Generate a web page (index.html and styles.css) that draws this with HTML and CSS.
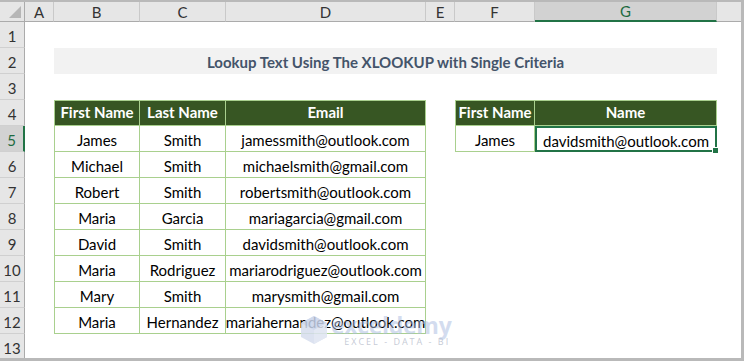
FILE: index.html
```html
<!DOCTYPE html>
<html lang="en">
<head>
    <meta charset="UTF-8">
    <title>Lookup Text Using XLOOKUP</title>
    <link rel="stylesheet" href="styles.css">
</head>
<body>
<div class="sheet">

    <!-- Column headers -->
    <div class="row head-row">
        <div class="corner"><span class="tri"></span></div>
        <div class="ch">A</div>
        <div class="ch">B</div>
        <div class="ch">C</div>
        <div class="ch">D</div>
        <div class="ch">E</div>
        <div class="ch">F</div>
        <div class="ch ch-sel">G</div>
        <div class="ch ch-end"></div>
    </div>

    <div class="row">
        <div class="rh">1</div>
        <div></div><div></div><div></div><div></div><div></div><div></div><div></div><div></div>
    </div>

    <div class="row">
        <div class="rh">2</div>
        <div></div>
        <div class="title">Lookup Text Using The XLOOKUP with Single Criteria</div>
        <div></div>
    </div>

    <div class="row">
        <div class="rh">3</div>
        <div></div><div></div><div></div><div></div><div></div><div></div><div></div><div></div>
    </div>

    <!-- Table headers -->
    <div class="row">
        <div class="rh">4</div>
        <div></div>
        <div class="tc th first">First Name</div>
        <div class="tc th">Last Name</div>
        <div class="tc th">Email</div>
        <div></div>
        <div class="tc th first">First Name</div>
        <div class="tc th">Name</div>
        <div></div>
    </div>

    <div class="row">
        <div class="rh rh-sel">5</div>
        <div></div>
        <div class="tc first">James</div>
        <div class="tc">Smith</div>
        <div class="tc">jamessmith@outlook.com</div>
        <div></div>
        <div class="tc first">James</div>
        <div class="tc active">davidsmith@outlook.com<span class="handle"></span></div>
        <div></div>
    </div>

    <div class="row">
        <div class="rh">6</div>
        <div></div>
        <div class="tc first">Michael</div>
        <div class="tc">Smith</div>
        <div class="tc">michaelsmith@gmail.com</div>
        <div></div><div></div><div></div><div></div>
    </div>

    <div class="row">
        <div class="rh">7</div>
        <div></div>
        <div class="tc first">Robert</div>
        <div class="tc">Smith</div>
        <div class="tc">robertsmith@outlook.com</div>
        <div></div><div></div><div></div><div></div>
    </div>

    <div class="row">
        <div class="rh">8</div>
        <div></div>
        <div class="tc first">Maria</div>
        <div class="tc">Garcia</div>
        <div class="tc">mariagarcia@gmail.com</div>
        <div></div><div></div><div></div><div></div>
    </div>

    <div class="row">
        <div class="rh">9</div>
        <div></div>
        <div class="tc first">David</div>
        <div class="tc">Smith</div>
        <div class="tc">davidsmith@outlook.com</div>
        <div></div><div></div><div></div><div></div>
    </div>

    <div class="row">
        <div class="rh">10</div>
        <div></div>
        <div class="tc first">Maria</div>
        <div class="tc">Rodriguez</div>
        <div class="tc">mariarodriguez@outlook.com</div>
        <div></div><div></div><div></div><div></div>
    </div>

    <div class="row">
        <div class="rh">11</div>
        <div></div>
        <div class="tc first">Mary</div>
        <div class="tc">Smith</div>
        <div class="tc">marysmith@gmail.com</div>
        <div></div><div></div><div></div><div></div>
    </div>

    <div class="row">
        <div class="rh">12</div>
        <div></div>
        <div class="tc first">Maria</div>
        <div class="tc">Hernandez</div>
        <div class="tc">mariahernandez@outlook.com</div>
        <div></div><div></div><div></div><div></div>
    </div>

    <div class="row">
        <div class="rh">13</div>
        <div></div><div></div><div></div><div></div><div></div><div></div><div></div><div></div>
    </div>

    <!-- Watermark -->
    <div class="watermark">
        <svg class="wm-logo" width="28" height="30" viewBox="0 0 28 30">
            <polygon points="14,1 27,8 27,22 14,29 1,22 1,8" fill="#d6deee"/>
            <polygon points="14,1 27,8 14,15 1,8" fill="#c8d3ea"/>
            <polygon points="14,15 27,8 27,22 14,29" fill="#dfe5f2"/>
        </svg>
        <div class="wm-text">
            <span class="wm-name">exceldemy</span>
            <span class="wm-sub">EXCEL - DATA - BI</span>
        </div>
    </div>

</div>
</body>
</html>
```

FILE: styles.css
```css
/* Page and sheet frame */
body {
    margin: 0;
    background: #ffffff;
    font-family: 'Lato', 'Open Sans', sans-serif;
}

.sheet {
    position: relative;
    width: 744px;
    height: 361px;
    box-sizing: border-box;
    border-top: 2px solid #b9b9b9;
    border-right: 3px solid #b9b9b9;
    border-bottom: 3px solid #b9b9b9;
    overflow: hidden;
    background: #ffffff;
}

/* Every row shares the same column widths */
.row {
    display: grid;
    grid-template-columns: 25px 29px 86px 86px 200px 29px 80px 182px 24px;
    height: 26px;
}

.head-row {
    height: 20px;
}

/* Column header cells */
.ch {
    background: #e6e6e6;
    border-right: 1px solid #c9c9c9;
    border-bottom: 1px solid #ababab;
    color: #333;
    font-size: 15px;
    display: flex;
    align-items: center;
    justify-content: center;
}

.ch-sel {
    background: #d2d2d2;
    border-bottom: 2px solid #217346;
    color: #1e6b41;
}

.ch-end {
    border-right: none;
}

.corner {
    position: relative;
    background: #e6e6e6;
    border-right: 1px solid #ababab;
    border-bottom: 1px solid #ababab;
}

.tri {
    position: absolute;
    right: 3px;
    bottom: 3px;
    width: 0;
    height: 0;
    border-left: 12px solid transparent;
    border-bottom: 12px solid #b6b6b6;
}

/* Row header cells */
.rh {
    background: #e6e6e6;
    border-right: 1px solid #ababab;
    border-bottom: 1px solid #d0d0d0;
    color: #333;
    font-size: 15px;
    display: flex;
    align-items: center;
    justify-content: center;
    padding-top: 3px;
    box-sizing: border-box;
}

.rh-sel {
    background: #d2d2d2;
    border-right: 2px solid #217346;
    color: #1e6b41;
}

/* Title banner */
.title {
    grid-column: span 6;
    background: #f2f2f2;
    color: #44546a;
    font-weight: bold;
    font-size: 15px;
    display: flex;
    align-items: center;
    justify-content: center;
    padding-top: 2px;
    box-sizing: border-box;
}

/* Table cells */
.tc {
    border-right: 1px solid #a9d08e;
    border-bottom: 1px solid #a9d08e;
    box-sizing: border-box;
    color: #000;
    font-size: 15px;
    display: flex;
    align-items: center;
    justify-content: center;
    padding-top: 3px;
    white-space: nowrap;
}

.tc.first {
    border-left: 1px solid #a9d08e;
}

.th {
    background: #375623;
    color: #fff;
    font-weight: bold;
    border-top: 1px solid #a9d08e;
    padding-top: 0;
    padding-bottom: 2px;
}

.active {
    position: relative;
    border: 2px solid #217346;
}

.handle {
    position: absolute;
    right: -4px;
    bottom: -4px;
    width: 5px;
    height: 5px;
    background: #217346;
    border: 1px solid #fff;
}

/* Watermark over the lower table */
.watermark {
    position: absolute;
    left: 300px;
    top: 311px;
    display: flex;
    align-items: center;
    gap: 3px;
    opacity: 0.85;
    pointer-events: none;
}

.wm-text {
    display: flex;
    flex-direction: column;
    align-items: center;
}

.wm-name {
    font-family: 'Open Sans', sans-serif;
    font-weight: bold;
    font-size: 23px;
    line-height: 24px;
    color: rgba(170, 188, 225, 0.6);
    letter-spacing: -0.3px;
}

.wm-sub {
    font-family: 'Open Sans', sans-serif;
    font-size: 9px;
    line-height: 10px;
    color: rgba(170, 178, 195, 0.8);
    letter-spacing: 2px;
    margin-left: 12px;
}
```
